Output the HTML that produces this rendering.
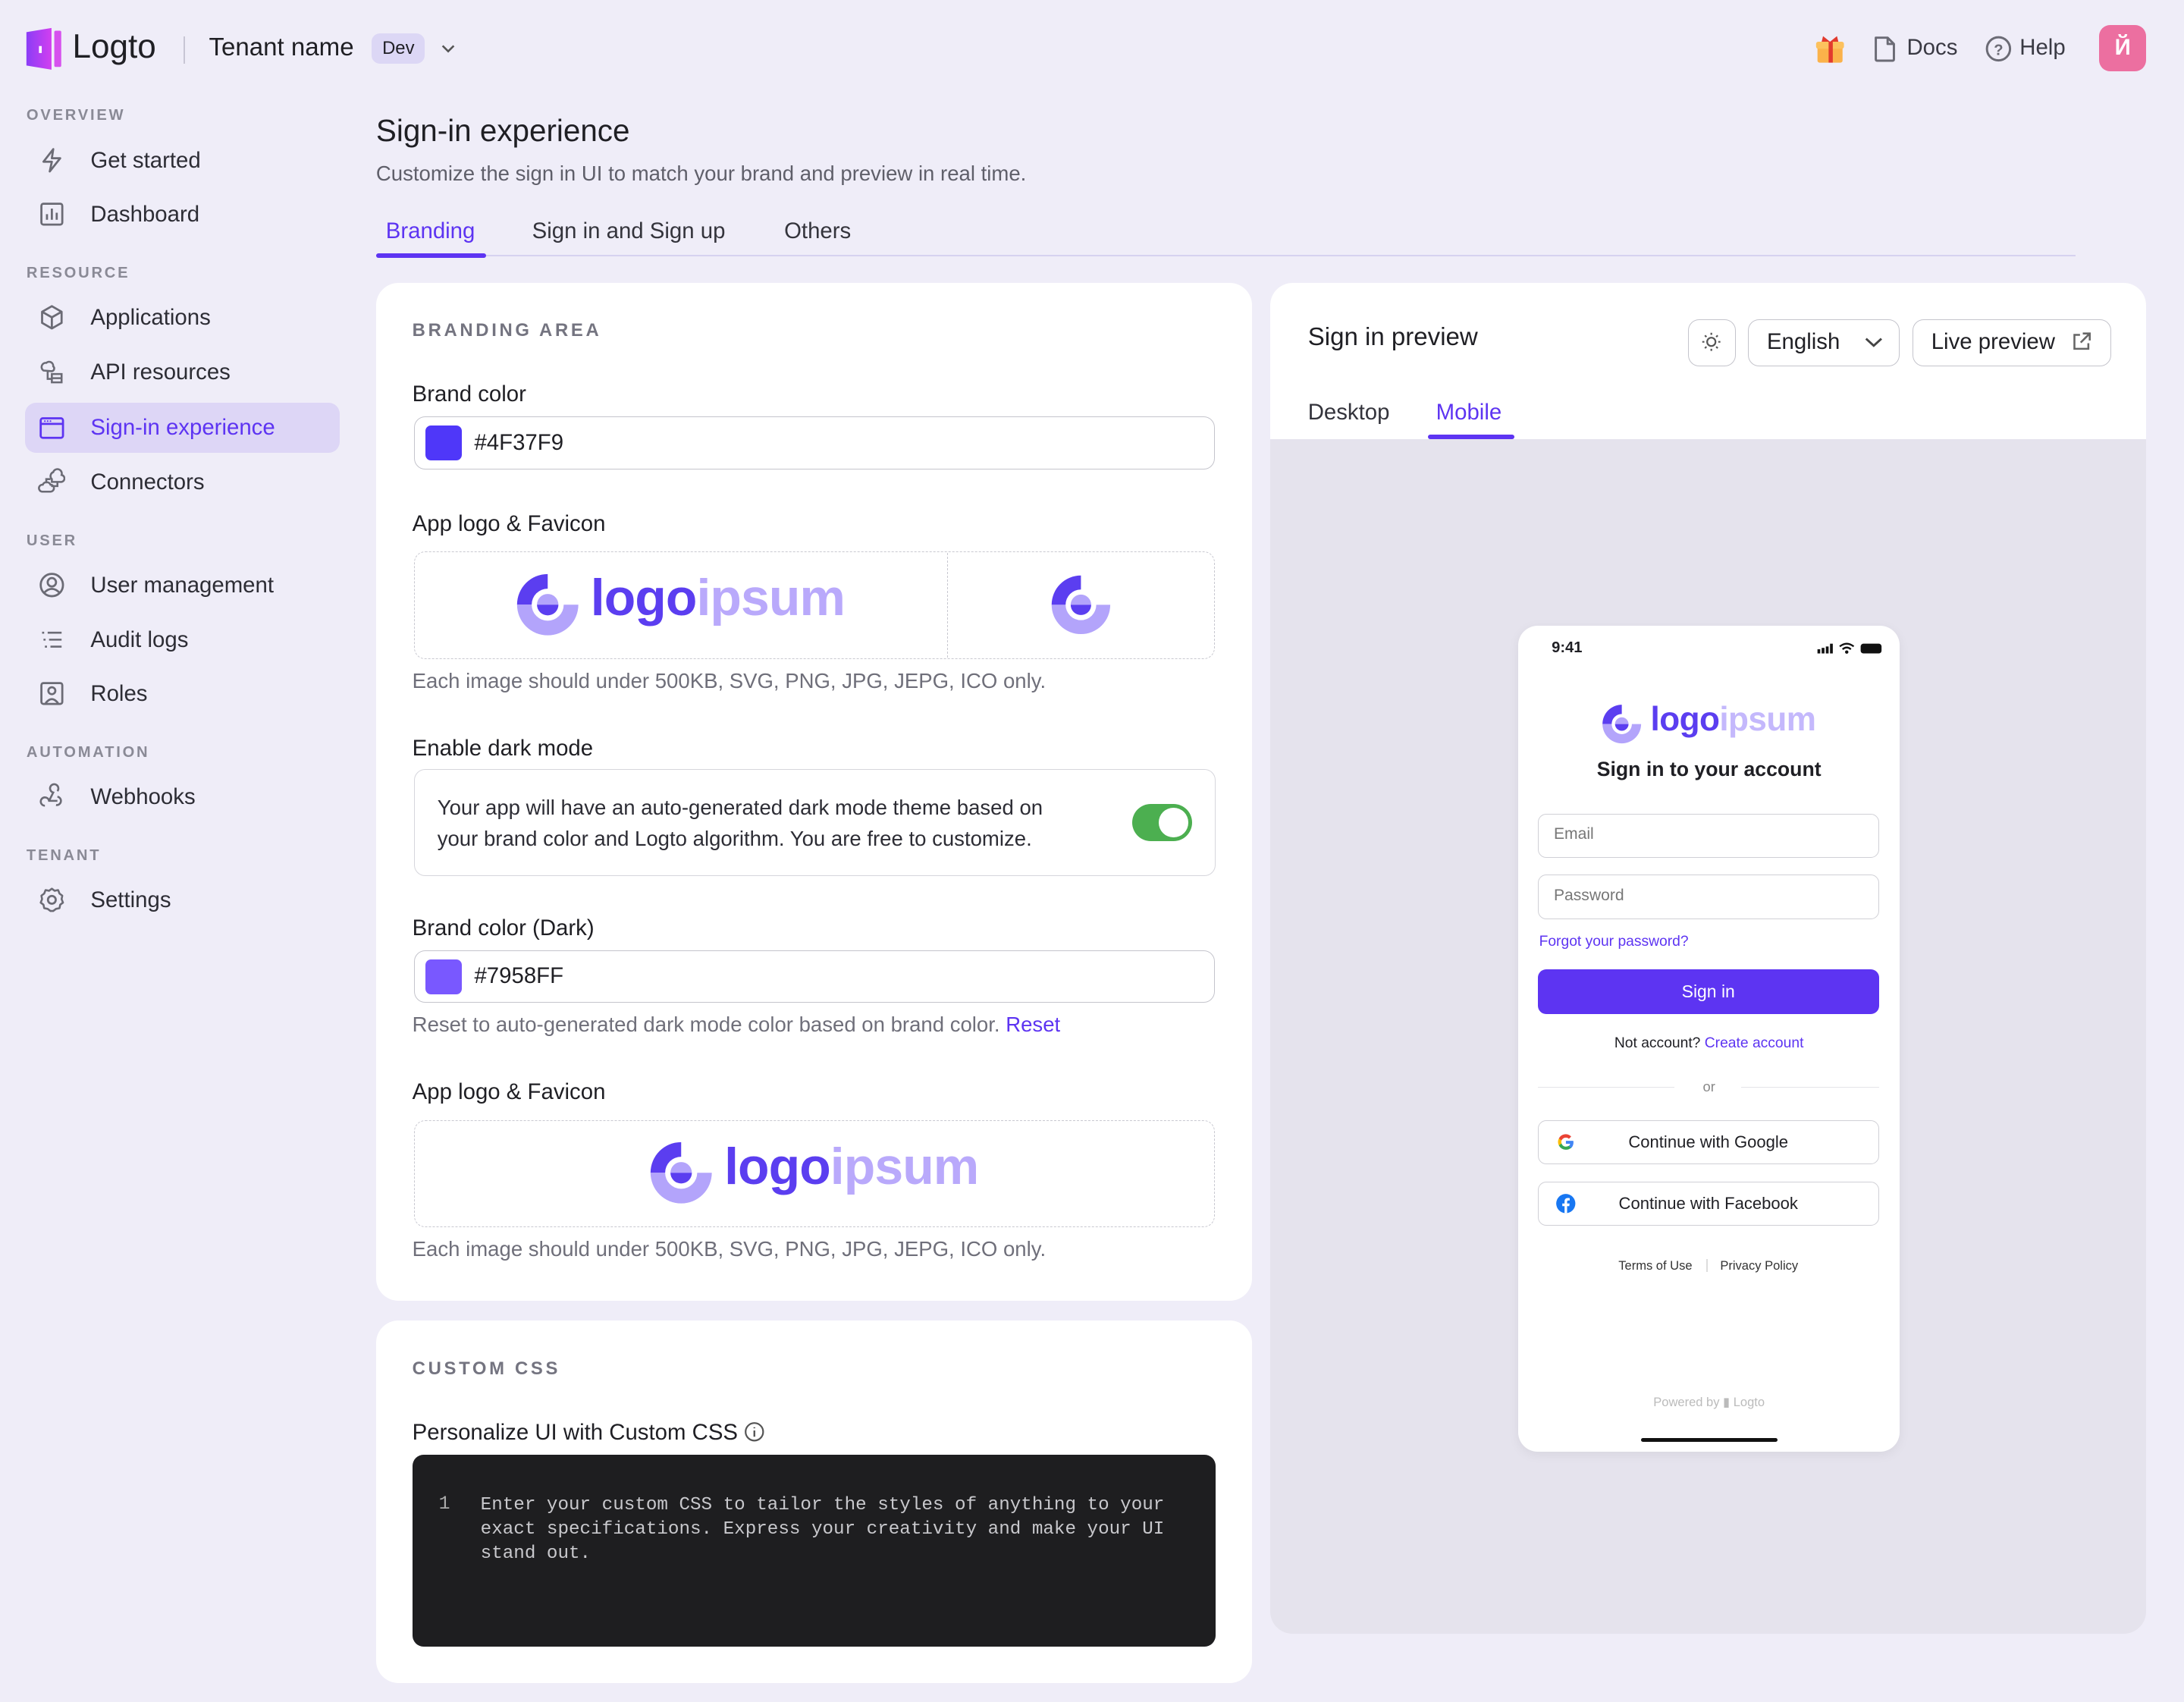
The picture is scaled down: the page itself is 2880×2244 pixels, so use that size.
<!DOCTYPE html>
<html><head><meta charset="utf-8"><style>
*{box-sizing:border-box;margin:0;padding:0}
html,body{width:2880px;height:2244px;overflow:hidden;background:#efedf8}
#w{zoom:1.83673;width:1568px;height:1222px;position:relative;font-family:"Liberation Sans",sans-serif;color:#1f1f24}
.a{position:absolute;white-space:nowrap}
.sec{font-size:11px;letter-spacing:1.5px;color:#8a8a96;font-weight:600;left:19px}
.it{left:65px;font-size:16px;color:#2d2d35}
.ic{left:27px;width:20px;height:20px}
.lab{font-size:16px;left:296px;color:#1f1f24}
.hint{font-size:15px;color:#6f6f7a;left:296px}
.inp{left:297px;width:575px;height:38px;border:1px solid #c4c4cc;border-radius:8px;background:#fff}
.dash{left:297px;width:575px;height:77px;border:1px dashed #c8c8d0;border-radius:8px}
.pinp{left:1104px;width:245px;height:32px;border:1px solid #d0d0d6;border-radius:6px;font-size:11.5px;color:#777;padding:8px 11px}
.pbtn{left:1104px;width:245px;height:32px;border:1px solid #d0d0d6;border-radius:6px;font-size:12px;text-align:center;line-height:30px}
.btn{border:1px solid #c4c4cc;border-radius:8px;height:34px;top:229px;font-size:16px;line-height:32px}
</style></head><body><div id="w">
<svg width="0" height="0" style="position:absolute"><defs><g id="lg1"><path d="M23 23 V1 A22 22 0 0 0 1 23Z" fill="#5b3ef0"/><path d="M1 23 A22 22 0 0 0 45 23Z" fill="#b3a4fb"/><circle cx="23" cy="23" r="11.5" fill="#fff"/><path d="M15.3 23 A7.7 7.7 0 0 1 30.7 23Z" fill="#b3a4fb"/><path d="M15.3 23 A7.7 7.7 0 0 0 30.7 23Z" fill="#5b3ef0"/></g></defs></svg>
<!-- top bar -->
<svg class="a" style="left:18px;top:19px" width="28" height="32" viewBox="0 0 28 32"><defs><linearGradient id="lg" x1="0" x2="1"><stop offset="0" stop-color="#8b3df6"/><stop offset="1" stop-color="#d23ff0"/></linearGradient></defs><path d="M1 4 L19 1 V31 L1 28Z" fill="url(#lg)"/><rect x="21" y="3" width="5" height="26" rx="1" fill="#d651ee"/><rect x="10" y="14" width="2" height="5" fill="#fff"/></svg>
<div class="a" style="left:52px;top:20px;font-size:24px;font-weight:500">Logto</div>
<div class="a" style="left:132px;top:26px;width:1px;height:20px;background:#c8c6d4"></div>
<div class="a" style="left:150px;top:24px;font-size:18px;font-weight:500">Tenant name</div>
<div class="a" style="left:267px;top:24px;width:38px;height:22px;border-radius:6px;background:#dcd7f5;font-size:13px;text-align:center;line-height:22px">Dev</div>
<svg class="a" style="left:316px;top:29px" width="12" height="12"><path d="M2 4l4 4 4-4" stroke="#555" fill="none" stroke-width="1.4"/></svg>
<svg class="a" style="left:1303px;top:24px" width="22" height="22" viewBox="0 0 22 22"><rect x="2" y="9" width="18" height="12" rx="1.5" fill="#fbb24a"/><rect x="1" y="6" width="20" height="5" rx="1.5" fill="#fcc15e"/><rect x="10" y="6" width="3" height="15" fill="#e23a2e"/><path d="M11 6 L6 2 L5 6Z M11 6 L16 2 L17 6Z" fill="#e23a2e"/></svg>
<svg class="a" style="left:1344px;top:25px" width="18" height="20" viewBox="0 0 18 20"><path d="M2.5 2 H11 L15.5 6.5 V17.5 Q15.5 18.5 14.5 18.5 H3.5 Q2.5 18.5 2.5 17.5Z M11 2 V6.5 H15.5" stroke="#6b6b75" stroke-width="1.6" fill="none" stroke-linejoin="round"/></svg>
<div class="a" style="left:1369px;top:25px;font-size:16px;color:#3a3a44">Docs</div>
<svg class="a" style="left:1425px;top:25px" width="20" height="20"><circle cx="10" cy="10" r="8.3" stroke="#6b6b75" stroke-width="1.6" fill="none"/><text x="10" y="14.5" font-size="11" text-anchor="middle" fill="#6b6b75" font-family="Liberation Sans" font-weight="bold">?</text></svg>
<div class="a" style="left:1450px;top:25px;font-size:16px;color:#3a3a44">Help</div>
<div class="a" style="left:1507px;top:18px;width:34px;height:33px;border-radius:8px;background:#ec6fa0;color:#fff;font-size:16px;font-weight:bold;text-align:center;line-height:33px">Й</div>
<!-- sidebar -->
<div class="a sec" style="top:77px">OVERVIEW</div>
<div class="a sec" style="top:190px">RESOURCE</div>
<div class="a sec" style="top:382px">USER</div>
<div class="a sec" style="top:534px">AUTOMATION</div>
<div class="a sec" style="top:608px">TENANT</div>
<div class="a" style="left:18px;top:289px;width:226px;height:36px;border-radius:8px;background:#ddd6f6"></div>
<svg class="a ic" style="top:105px" viewBox="0 0 20 20"><path d="M11 2 L4 11 H10 L8.5 18 L16 8.5 H10Z" stroke="#6b6b75" stroke-width="1.5" fill="none" stroke-linejoin="round"/></svg>
<div class="a it" style="top:106px">Get started</div>
<svg class="a ic" style="top:144px" viewBox="0 0 20 20"><rect x="2.5" y="2.5" width="15" height="15" rx="1.5" stroke="#6b6b75" stroke-width="1.5" fill="none"/><path d="M6.5 14V10M10 14V6M13.5 14V9" stroke="#6b6b75" stroke-width="1.5"/></svg>
<div class="a it" style="top:145px">Dashboard</div>
<svg class="a ic" style="top:218px" viewBox="0 0 20 20"><path d="M10 2 L17 6 V14 L10 18 L3 14 V6Z M3 6 L10 10 L17 6 M10 10 V18" stroke="#6b6b75" stroke-width="1.5" fill="none" stroke-linejoin="round"/></svg>
<div class="a it" style="top:219px">Applications</div>
<svg class="a ic" style="top:257px" viewBox="0 0 20 20"><path d="M4 9 A3 3 0 0 1 6 3.5 A3 3 0 0 1 11 6 A2 2 0 0 1 10 9.5Z M7 9.5 V15 H10 M10 11.5 H17 V17.5 H10Z M10 14.5 H17" stroke="#6b6b75" stroke-width="1.4" fill="none"/></svg>
<div class="a it" style="top:258px">API resources</div>
<svg class="a ic" style="top:297px" viewBox="0 0 20 20"><rect x="2" y="3" width="16" height="14" rx="1.5" stroke="#5d34f2" stroke-width="1.5" fill="none"/><path d="M2 7 H18" stroke="#5d34f2" stroke-width="1.5"/><circle cx="5" cy="5" r=".6" fill="#5d34f2"/><circle cx="7" cy="5" r=".6" fill="#5d34f2"/><circle cx="9" cy="5" r=".6" fill="#5d34f2"/></svg>
<div class="a it" style="top:298px;color:#5d34f2">Sign-in experience</div>
<svg class="a ic" style="top:336px" viewBox="0 0 20 20"><path d="M10 8 A3 3 0 0 1 11 3 A3 3 0 0 1 17 5 A2.5 2.5 0 0 1 16 10 H10Z M3 17 A2.5 2.5 0 0 1 3.5 12 A3 3 0 0 1 9 12 A2.5 2.5 0 0 1 9 17Z M6 11 V8 H9 M14 10 V13 H9.5" stroke="#6b6b75" stroke-width="1.4" fill="none"/></svg>
<div class="a it" style="top:337px">Connectors</div>
<svg class="a ic" style="top:410px" viewBox="0 0 20 20"><circle cx="10" cy="10" r="8" stroke="#6b6b75" stroke-width="1.5" fill="none"/><circle cx="10" cy="8" r="3" stroke="#6b6b75" stroke-width="1.5" fill="none"/><path d="M4.5 15.5 Q10 10 15.5 15.5" stroke="#6b6b75" stroke-width="1.5" fill="none"/></svg>
<div class="a it" style="top:411px">User management</div>
<svg class="a ic" style="top:449px" viewBox="0 0 20 20"><path d="M3 5H4.5M7 5H17M4 10H5.5M8 10H17M5 15H6.5M9 15H17" stroke="#6b6b75" stroke-width="1.4"/></svg>
<div class="a it" style="top:450px">Audit logs</div>
<svg class="a ic" style="top:488px" viewBox="0 0 20 20"><rect x="2.5" y="2.5" width="15" height="15" rx="1.5" stroke="#6b6b75" stroke-width="1.5" fill="none"/><circle cx="10" cy="8" r="2.5" stroke="#6b6b75" stroke-width="1.5" fill="none"/><path d="M5.5 17 Q10 11 14.5 17" stroke="#6b6b75" stroke-width="1.5" fill="none"/></svg>
<div class="a it" style="top:489px">Roles</div>
<svg class="a ic" style="top:562px" viewBox="0 0 20 20"><path d="M8 13 L11 7 A3 3 0 1 1 14 6 M5 16.5 A3 3 0 1 1 8 13 H14 M14 10 A3 3 0 1 1 13 16" stroke="#6b6b75" stroke-width="1.4" fill="none"/></svg>
<div class="a it" style="top:563px">Webhooks</div>
<svg class="a ic" style="top:636px" viewBox="0 0 20 20"><circle cx="10" cy="10" r="2.8" stroke="#6b6b75" stroke-width="1.5" fill="none"/><path d="M10 2 L12 3.5 L14.5 3 L15.5 5.5 L17.5 7 L17 9.5 L18 12 L16 13.5 L15.5 16 L13 16.5 L11 18 L9 18 L7 16.5 L4.5 16 L4 13.5 L2 12 L3 9.5 L2.5 7 L4.5 5.5 L5.5 3 L8 3.5Z" stroke="#6b6b75" stroke-width="1.4" fill="none" stroke-linejoin="round"/></svg>
<div class="a it" style="top:637px">Settings</div>
<!-- main header -->
<div class="a" style="left:270px;top:81px;font-size:22px;font-weight:500">Sign-in experience</div>
<div class="a" style="left:270px;top:116px;font-size:15px;color:#5f5f6a">Customize the sign in UI to match your brand and preview in real time.</div>
<div class="a" style="left:270px;top:183px;width:1220px;height:1px;background:#d6d2f0"></div>
<div class="a" style="left:277px;top:157px;font-size:16px;color:#5d34f2">Branding</div>
<div class="a" style="left:270px;top:182px;width:79px;height:3px;border-radius:2px;background:#5d34f2"></div>
<div class="a" style="left:382px;top:157px;font-size:16px;color:#34343c">Sign in and Sign up</div>
<div class="a" style="left:563px;top:157px;font-size:16px;color:#34343c">Others</div>
<!-- left card -->
<div class="a" style="left:270px;top:203px;width:629px;height:731px;background:#fff;border-radius:16px"></div>
<div class="a" style="left:296px;top:230px;font-size:13px;letter-spacing:2px;color:#747480;font-weight:600">BRANDING AREA</div>
<div class="a lab" style="top:274px">Brand color</div>
<div class="a inp" style="top:299px"><div class="a" style="left:8px;top:6px;width:26px;height:25px;border-radius:4px;background:#4f37f9"></div><div class="a" style="left:43px;top:9px;font-size:16px">#4F37F9</div></div>
<div class="a lab" style="top:367px">App logo &amp; Favicon</div>
<div class="a dash" style="top:396px"></div>
<div class="a" style="left:680px;top:397px;width:0;height:75px;border-left:1px dashed #c8c8d0"></div>
<svg class="a" style="left:370px;top:411px" width="46" height="46" viewBox="0 0 46 46"><use href="#lg1"/></svg>
<div class="a" style="left:424px;top:408px;font-size:37px;font-weight:bold;letter-spacing:-.5px"><span style="color:#5b3ef0">logo</span><span style="color:#b9a9fb">ipsum</span></div>
<svg class="a" style="left:754px;top:412px" width="44" height="44" viewBox="0 0 46 46"><use href="#lg1"/></svg>
<div class="a hint" style="top:480px">Each image should under 500KB, SVG, PNG, JPG, JEPG, ICO only.</div>
<div class="a lab" style="top:528px">Enable dark mode</div>
<div class="a" style="left:297px;top:552px;width:576px;height:77px;border:1px solid #d6d6dc;border-radius:8px"></div>
<div class="a" style="left:314px;top:569px;font-size:15px;line-height:22px;color:#2d2d35">Your app will have an auto-generated dark mode theme based on<br>your brand color and Logto algorithm. You are free to customize.</div>
<div class="a" style="left:813px;top:577px;width:43px;height:27px;border-radius:14px;background:#4caf50"><div class="a" style="left:19px;top:3px;width:21px;height:21px;border-radius:50%;background:#fff"></div></div>
<div class="a lab" style="top:657px">Brand color (Dark)</div>
<div class="a inp" style="top:682px"><div class="a" style="left:8px;top:6px;width:26px;height:25px;border-radius:4px;background:#7958ff"></div><div class="a" style="left:43px;top:9px;font-size:16px">#7958FF</div></div>
<div class="a hint" style="top:727px">Reset to auto-generated dark mode color based on brand color. <span style="color:#5d34f2">Reset</span></div>
<div class="a lab" style="top:775px">App logo &amp; Favicon</div>
<div class="a dash" style="top:804px"></div>
<svg class="a" style="left:466px;top:819px" width="46" height="46" viewBox="0 0 46 46"><use href="#lg1"/></svg>
<div class="a" style="left:520px;top:816px;font-size:37px;font-weight:bold;letter-spacing:-.5px"><span style="color:#5b3ef0">logo</span><span style="color:#b9a9fb">ipsum</span></div>
<div class="a hint" style="top:888px">Each image should under 500KB, SVG, PNG, JPG, JEPG, ICO only.</div>
<!-- css card -->
<div class="a" style="left:270px;top:948px;width:629px;height:260px;background:#fff;border-radius:16px"></div>
<div class="a" style="left:296px;top:975px;font-size:13px;letter-spacing:2px;color:#747480;font-weight:600">CUSTOM CSS</div>
<div class="a lab" style="top:1019px">Personalize UI with Custom CSS <svg width="15" height="15" style="vertical-align:-2px"><circle cx="7.5" cy="7.5" r="6.3" stroke="#555" stroke-width="1.2" fill="none"/><path d="M7.5 6.5V11M7.5 4.2V5" stroke="#555" stroke-width="1.3"/></svg></div>
<div class="a" style="left:296px;top:1044px;width:577px;height:138px;background:#1e1e20;border-radius:8px"></div>
<div class="a" style="left:315px;top:1072px;font-family:'Liberation Mono',monospace;font-size:13.5px;color:#aaa">1</div>
<div class="a" style="left:345px;top:1072px;font-family:'Liberation Mono',monospace;font-size:13.2px;line-height:17.5px;color:#c8c8cc">Enter your custom CSS to tailor the styles of anything to your<br>exact specifications. Express your creativity and make your UI<br>stand out.</div>
<!-- right card -->
<div class="a" style="left:912px;top:203px;width:629px;height:970px;background:#e5e3ed;border-radius:16px;overflow:hidden"><div style="height:112px;background:#fff"></div></div>
<div class="a" style="left:939px;top:232px;font-size:18px;font-weight:500">Sign in preview</div>
<div class="a btn" style="left:1212px;width:34px"><svg style="position:absolute;left:8px;top:8px" width="16" height="16" viewBox="0 0 16 16"><circle cx="8" cy="8" r="3" stroke="#555" stroke-width="1.2" fill="none"/><path d="M8 1.5V3M8 13V14.5M1.5 8H3M13 8H14.5M3.4 3.4L4.5 4.5M11.5 11.5L12.6 12.6M3.4 12.6L4.5 11.5M11.5 4.5L12.6 3.4" stroke="#555" stroke-width="1.2"/></svg></div>
<div class="a btn" style="left:1255px;width:109px;padding-left:13px">English<svg style="position:absolute;right:11px;top:11px" width="14" height="10"><path d="M1.5 2.5l5.5 5 5.5-5" stroke="#444" stroke-width="1.6" fill="none"/></svg></div>
<div class="a btn" style="left:1373px;width:143px;padding-left:13px;font-weight:500">Live preview<svg style="position:absolute;right:13px;top:8px" width="16" height="16" viewBox="0 0 16 16"><path d="M7 3H3V13H13V9M9 2H14V7M14 2L7.5 8.5" stroke="#666" stroke-width="1.4" fill="none"/></svg></div>
<div class="a" style="left:939px;top:287px;font-size:16px;color:#34343c">Desktop</div>
<div class="a" style="left:1031px;top:287px;font-size:16px;color:#5d34f2">Mobile</div>
<div class="a" style="left:1025px;top:312px;width:62px;height:3px;background:#5d34f2;border-radius:2px"></div>
<!-- phone -->
<div class="a" style="left:1090px;top:449px;width:274px;height:593px;background:#fff;border-radius:14px;box-shadow:0 2px 8px rgba(0,0,0,.06)"></div>
<div class="a" style="left:1114px;top:459px;font-size:11px;font-weight:bold">9:41</div>
<svg class="a" style="left:1303px;top:460px" width="50" height="10"><rect x="2" y="6" width="2" height="3" fill="#111"/><rect x="5" y="5" width="2" height="4" fill="#111"/><rect x="8" y="4" width="2" height="5" fill="#111"/><rect x="11" y="2" width="2" height="7" fill="#111"/><path d="M18 4 Q23 0 28 4 M20 6 Q23 3.5 26 6" stroke="#111" stroke-width="1.3" fill="none"/><circle cx="23" cy="8" r="1.2" fill="#111"/><rect x="33" y="2" width="15" height="7" rx="2" fill="#111"/></svg>
<svg class="a" style="left:1150px;top:505px" width="29" height="29" viewBox="0 0 46 46"><use href="#lg1"/></svg>
<div class="a" style="left:1185px;top:503px;font-size:24px;font-weight:bold;letter-spacing:-.3px"><span style="color:#5b3ef0">logo</span><span style="color:#c4b8fc">ipsum</span></div>
<div class="a" style="left:1090px;width:274px;text-align:center;top:544px;font-size:14.5px;font-weight:bold">Sign in to your account</div>
<div class="a pinp" style="top:584px">Email</div>
<div class="a pinp" style="top:628px">Password</div>
<div class="a" style="left:1105px;top:670px;font-size:10.5px;color:#5d34f2">Forgot your password?</div>
<div class="a" style="left:1104px;top:696px;width:245px;height:32px;border-radius:6px;background:#5d34f2;color:#fff;text-align:center;line-height:32px;font-size:12.5px">Sign in</div>
<div class="a" style="left:1090px;width:274px;text-align:center;top:743px;font-size:10.5px">Not account? <span style="color:#5d34f2">Create account</span></div>
<div class="a" style="left:1104px;top:780px;width:98px;height:1px;background:#e4e4e8"></div>
<div class="a" style="left:1250px;top:780px;width:99px;height:1px;background:#e4e4e8"></div>
<div class="a" style="left:1090px;width:274px;text-align:center;top:774px;font-size:10px;color:#888">or</div>
<div class="a pbtn" style="top:804px">Continue with Google<svg style="position:absolute;left:13px;top:9px" width="13" height="13" viewBox="0 0 24 24"><path d="M22 12.2c0-.7-.1-1.4-.2-2H12v3.9h5.6a4.8 4.8 0 0 1-2.1 3.1v2.6h3.4c2-1.8 3.1-4.5 3.1-7.6z" fill="#4285f4"/><path d="M12 22c2.8 0 5.2-.9 6.9-2.5l-3.4-2.6c-.9.6-2.1 1-3.5 1-2.7 0-5-1.8-5.800-4.3H2.7v2.7A10 10 0 0 0 12 22z" fill="#34a853"/><path d="M6.2 13.6a6 6 0 0 1 0-3.9V7H2.7a10 10 0 0 0 0 9.3z" fill="#fbbc05"/><path d="M12 5.9c1.5 0 2.9.5 4 1.6l3-3A10 10 0 0 0 2.7 7l3.5 2.7C7 7.7 9.3 5.9 12 5.9z" fill="#ea4335"/></svg></div>
<div class="a pbtn" style="top:848px">Continue with Facebook<svg style="position:absolute;left:12px;top:8px" width="15" height="15" viewBox="0 0 24 24"><circle cx="12" cy="12" r="11" fill="#1877f2"/><path d="M13.5 23V15H16l.4-3h-2.9v-2c0-.9.3-1.5 1.5-1.5h1.5V5.8c-.3 0-1.2-.1-2.2-.1-2.2 0-3.700 1.3-3.700 3.8V12H8v3h2.6v8z" fill="#fff"/></svg></div>
<div class="a" style="left:1162px;top:903px;font-size:9px;color:#333">Terms of Use</div>
<div class="a" style="left:1225px;top:904px;width:1px;height:9px;background:#ddd"></div>
<div class="a" style="left:1235px;top:903px;font-size:9px;color:#333">Privacy Policy</div>
<div class="a" style="left:1090px;width:274px;text-align:center;top:1001px;font-size:9px;color:#bbb">Powered by ▮ Logto</div>
<div class="a" style="left:1178px;top:1032px;width:98px;height:3px;border-radius:2px;background:#111"></div>
</div></body></html>
